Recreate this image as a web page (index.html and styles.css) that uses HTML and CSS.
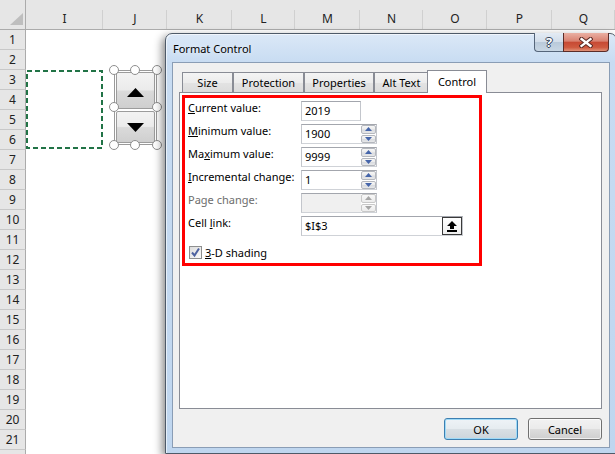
FILE: index.html
```html
<!DOCTYPE html>
<html lang="en">
<head>
<meta charset="utf-8">
<title>Format Control</title>
<link rel="stylesheet" href="styles.css">
</head>
<body>
<div class="sheet">
  <div class="corner"><svg width="13" height="12" viewBox="0 0 13 12"><polygon points="0,12 13,12 13,0" fill="#bebebe"/></svg></div>
  <div class="ch">I</div><div class="ch">J</div><div class="ch">K</div><div class="ch">L</div><div class="ch">M</div><div class="ch">N</div><div class="ch">O</div><div class="ch">P</div><div class="ch">Q</div>
  <div class="cells">
    <svg class="marquee" width="77" height="79" viewBox="0 0 77 79"><rect x="1" y="1" width="75" height="77" fill="none" stroke="#217346" stroke-width="2" stroke-dasharray="5 3"/></svg>
    <div class="spinsel">
      <div class="sbtn sbtn-up"><svg width="17" height="9" viewBox="0 0 17 9"><polygon points="0,9 8.5,0 17,9" fill="#000"/></svg></div>
      <div class="sbtn sbtn-down"><svg width="17" height="9" viewBox="0 0 17 9"><polygon points="0,0 17,0 8.5,9" fill="#000"/></svg></div>
      <span class="hd hd-tl"></span><span class="hd hd-tc"></span><span class="hd hd-tr"></span>
      <span class="hd hd-ml"></span><span class="hd hd-mr"></span>
      <span class="hd hd-bl"></span><span class="hd hd-bc"></span><span class="hd hd-br"></span>
    </div>
  </div>
  <div class="rh">1</div><div class="rh">2</div><div class="rh">3</div><div class="rh">4</div><div class="rh">5</div><div class="rh">6</div><div class="rh">7</div><div class="rh">8</div><div class="rh">9</div><div class="rh">10</div><div class="rh">11</div>
  <div class="rh">12</div><div class="rh">13</div><div class="rh">14</div><div class="rh">15</div><div class="rh">16</div><div class="rh">17</div><div class="rh">18</div><div class="rh">19</div><div class="rh">20</div><div class="rh">21</div><div class="rh"></div>
</div>

<div class="dialog">
  <div class="titlebar">
    <span class="title">Format Control</span>
    <div class="caption">
      <span class="cbtn help">?</span>
      <span class="cbtn close"><svg width="14" height="11" viewBox="0 0 14 11"><path d="M2.5 2 L11.5 9 M11.5 2 L2.5 9" stroke="#5a2a24" stroke-width="4.2" stroke-linecap="square" fill="none"/><path d="M2.5 2 L11.5 9 M11.5 2 L2.5 9" stroke="#fff" stroke-width="2.3" stroke-linecap="square" fill="none"/></svg></span>
    </div>
  </div>
  <div class="client">
    <div class="tabs">
      <div class="tab tab-size">Size</div>
      <div class="tab tab-prot">Protection</div>
      <div class="tab tab-props">Properties</div>
      <div class="tab tab-alt">Alt Text</div>
      <div class="tab tab-ctrl active">Control</div>
    </div>
    <div class="panel">
      <div class="ctrl-box">
        <div class="form">
          <span class="lbl"><u>C</u>urrent value:</span>
          <div class="field fld-short"><span class="val">2019</span></div>

          <span class="lbl"><u>M</u>inimum value:</span>
          <div class="field fld-spin"><span class="val">1900</span>
            <div class="spin"><span class="sb"><svg width="7" height="4" viewBox="0 0 7 4"><polygon points="0,4 3.5,0 7,4"/></svg></span><span class="sb"><svg width="7" height="4" viewBox="0 0 7 4"><polygon points="0,0 7,0 3.5,4"/></svg></span></div>
          </div>

          <span class="lbl">Ma<u>x</u>imum value:</span>
          <div class="field fld-spin"><span class="val">9999</span>
            <div class="spin"><span class="sb"><svg width="7" height="4" viewBox="0 0 7 4"><polygon points="0,4 3.5,0 7,4"/></svg></span><span class="sb"><svg width="7" height="4" viewBox="0 0 7 4"><polygon points="0,0 7,0 3.5,4"/></svg></span></div>
          </div>

          <span class="lbl"><u>I</u>ncremental change:</span>
          <div class="field fld-spin"><span class="val">1</span>
            <div class="spin"><span class="sb"><svg width="7" height="4" viewBox="0 0 7 4"><polygon points="0,4 3.5,0 7,4"/></svg></span><span class="sb"><svg width="7" height="4" viewBox="0 0 7 4"><polygon points="0,0 7,0 3.5,4"/></svg></span></div>
          </div>

          <span class="lbl lbl-disabled">Page change:</span>
          <div class="field fld-spin fld-disabled"><span class="val"></span>
            <div class="spin"><span class="sb"><svg width="7" height="4" viewBox="0 0 7 4"><polygon points="0,4 3.5,0 7,4"/></svg></span><span class="sb"><svg width="7" height="4" viewBox="0 0 7 4"><polygon points="0,0 7,0 3.5,4"/></svg></span></div>
          </div>

          <span class="lbl">Cell <u>l</u>ink:</span>
          <div class="field fld-link"><span class="val">$I$3</span>
            <span class="refbtn"><svg width="10" height="11" viewBox="0 0 10 11"><polygon points="5,0 10,5 7,5 7,8 3,8 3,5 0,5" fill="#000"/><rect x="0" y="9" width="10" height="2" fill="#000"/></svg></span>
          </div>
        </div>
        <div class="check">
          <span class="cbox"><svg width="11" height="11" viewBox="0 0 11 11"><polyline points="2,5.5 4.5,8.5 9,1.5" fill="none" stroke="#4d62a0" stroke-width="2"/></svg></span>
          <span><u>3</u>-D shading</span>
        </div>
      </div>
    </div>
    <div class="buttons">
      <button class="btn btn-default">OK</button>
      <button class="btn">Cancel</button>
    </div>
  </div>
</div>
</body>
</html>
```

FILE: styles.css
```css
* { box-sizing: border-box; }
html, body {
  margin: 0;
  padding: 0;
  width: 615px;
  height: 454px;
  overflow: hidden;
}
body {
  position: relative;
  background: #fff;
  font-family: "Noto Sans", "DejaVu Sans", sans-serif;
}

/* ---------- spreadsheet ---------- */
.sheet {
  display: grid;
  grid-template-columns: 26px 77px 64px 65px 63px 65px 63px 64px 65px 63px;
  grid-template-rows: 30px repeat(22, 20px);
}
.corner {
  background: #e6e6e6;
  border-right: 1px solid #ababab;
  border-bottom: 1px solid #ababab;
  display: flex;
  align-items: flex-end;
  justify-content: flex-end;
  padding: 0 2px 4px 0;
}
.corner svg { display: block; }
.ch {
  background: linear-gradient(#d0d0d0, #d0d0d0) right bottom / 1px 19px no-repeat, #e6e6e6;
  border-bottom: 1px solid #ababab;
  display: flex;
  align-items: flex-end;
  justify-content: center;
  padding-bottom: 3px;
  font-size: 12px;
  line-height: 14px;
  color: #222;
}
.rh {
  grid-column: 1;
  background: #e6e6e6;
  border-right: 1px solid #ababab;
  border-bottom: 1px solid #c8c8c8;
  display: flex;
  align-items: center;
  justify-content: center;
  font-size: 12px;
  color: #222;
}
.cells {
  grid-column: 2 / -1;
  grid-row: 2 / -1;
  position: relative;
  background: #fff;
}
.marquee {
  position: absolute;
  left: 0;
  top: 40px;
  display: block;
}
.spinsel {
  position: absolute;
  left: 88px;
  top: 40px;
  width: 43px;
  height: 75px;
  border: 1px solid #9a9a9a;
  padding: 1px;
  display: flex;
  flex-direction: column;
  gap: 2px;
}
.sbtn {
  flex: 1;
  border: 1px solid #9c9c9c;
  border-radius: 2px;
  background: linear-gradient(#f3f3f3 0%, #ebebeb 48%, #dadada 52%, #cfcfcf 100%);
  display: flex;
  align-items: center;
  justify-content: center;
}
.sbtn svg { display: block; }
.sbtn-up { padding-top: 5px; }
.sbtn-down { padding-top: 1px; }
.hd {
  position: absolute;
  width: 10px;
  height: 10px;
  border-radius: 50%;
  border: 1.5px solid #8e8e8e;
  background: #fff;
}
.hd-tl { left: -6px; top: -6px; }
.hd-tc { left: 15px; top: -6px; }
.hd-tr { left: 37px; top: -6px; }
.hd-ml { left: -6px; top: 31px; }
.hd-mr { left: 37px; top: 31px; }
.hd-bl { left: -6px; top: 69px; }
.hd-bc { left: 15px; top: 69px; }
.hd-br { left: 37px; top: 69px; }

/* ---------- dialog window ---------- */
.dialog {
  position: absolute;
  left: 165px;
  top: 33px;
  width: 452px;
  height: 421px;
  border: 1px solid #4e5a68;
  border-radius: 7px 7px 0 0;
  padding: 0 6px 5px 6px;
  background: linear-gradient(180deg, #dbe8f7 0px, #c8dcf2 28px, #bfd6ef 100%);
  box-shadow: -3px 3px 8px rgba(0, 0, 0, 0.45), inset 1px 1px 0 rgba(255, 255, 255, 0.6);
  display: flex;
  flex-direction: column;
  font-size: 11px;
  color: #000;
}
.titlebar {
  height: 28px;
  flex: none;
  display: flex;
  align-items: center;
  padding-left: 1px;
}
.title {
  font-size: 11px;
  color: #000;
  text-shadow: 0 0 6px rgba(255, 255, 255, 0.9);
}
.caption {
  margin-left: auto;
  margin-right: 1px;
  margin-top: -1px;
  align-self: flex-start;
  display: flex;
}
.cbtn {
  height: 19px;
  display: flex;
  align-items: center;
  justify-content: center;
  border: 1px solid #55657a;
  border-top: none;
}
.help {
  width: 29px;
  border-right: none;
  border-radius: 0 0 0 4px;
  background: linear-gradient(#e3ebf4 0%, #d3deea 48%, #b9c9da 52%, #c8d6e4 100%);
  color: #fff;
  font-weight: bold;
  font-size: 13px;
  line-height: 13px;
  text-shadow: 1px 0 0 #34445a, -1px 0 0 #34445a, 0 1px 0 #34445a, 0 -1px 0 #34445a;
}
.close {
  width: 46px;
  border-color: #5b2c27;
  border-radius: 0 0 4px 0;
  background: linear-gradient(#eab0a3 0%, #d98170 45%, #c74a34 52%, #cf5a40 80%, #e09278 100%);
}
.close svg { display: block; }

.client {
  flex: 1;
  background: #f0f0f0;
  border: 1px solid #8a9db5;
  display: flex;
  flex-direction: column;
  padding: 7px 7px 7px 6px;
}

/* tabs */
.tabs {
  height: 22px;
  flex: none;
  display: flex;
  align-items: flex-end;
  padding-left: 3px;
  position: relative;
  z-index: 1;
}
.tab {
  height: 20px;
  border: 1px solid #898c95;
  border-bottom: none;
  background: linear-gradient(#f4f4f4 0%, #ececec 50%, #e3e3e3 51%, #dcdcdc 100%);
  display: flex;
  align-items: center;
  justify-content: center;
  font-size: 11px;
  white-space: nowrap;
}
.tab-size { width: 51px; }
.tab-prot { width: 71px; }
.tab-props { width: 70px; }
.tab-alt { width: 55px; }
.tab-ctrl { width: 60px; }
.tab.active {
  height: 23px;
  margin-left: -2px;
  margin-bottom: -1px;
  background: #fff;
  padding-bottom: 2px;
}

.panel {
  flex: 1;
  background: #fff;
  border: 1px solid #898c95;
  padding: 2px 0 0 2px;
}
.ctrl-box {
  width: 300px;
  border: 3px solid #ff0000;
  padding: 3px 0 4px 3px;
}
.form {
  display: grid;
  grid-template-columns: 113px auto;
  grid-auto-rows: 20px;
  row-gap: 3px;
  align-items: start;
}
.lbl {
  line-height: 16px;
  margin-top: -1px;
  white-space: nowrap;
}
.lbl-disabled { color: #6d6d6d; }
.field {
  height: 20px;
  display: flex;
  align-items: center;
  background: #fff;
  border: 1px solid #a9abb2;
  border-color: #a3a6ad #c3c6cc #cfd2d7 #c3c6cc;
}
.val {
  flex: 1;
  padding-left: 3px;
  line-height: 18px;
  white-space: nowrap;
}
.fld-short { width: 60px; }
.fld-spin { width: 76px; }
.fld-link { width: 162px; }
.fld-disabled { background: #f0f0f0; }
.fld-disabled .val { background: #f0f0f0; }

.spin {
  width: 15px;
  height: 18px;
  display: flex;
  flex-direction: column;
  gap: 1px;
  background: #fff;
}
.sb {
  flex: 1;
  border: 1px solid #b4b7bd;
  border-radius: 2px;
  background: linear-gradient(#f6f6f6 0%, #ececec 45%, #d9dbdf 55%, #e6e7e9 100%);
  display: flex;
  align-items: center;
  justify-content: center;
}
.sb svg { display: block; fill: #4565aa; }
.fld-disabled .sb svg { fill: #a6a6a6; }
.fld-disabled .sb { background: linear-gradient(#f8f8f8, #ececec); border-color: #c8c8c8; }

.refbtn {
  width: 20px;
  height: 18px;
  margin-right: 0;
  border: 1px solid #3a3a3a;
  background: linear-gradient(#ffffff, #eeeeee);
  display: flex;
  align-items: center;
  justify-content: center;
}
.refbtn svg { display: block; }

.check {
  display: flex;
  align-items: center;
  gap: 3px;
  height: 13px;
  margin-top: 10px;
  margin-left: 1px;
  line-height: 13px;
}
.cbox {
  width: 13px;
  height: 13px;
  border: 1px solid #8e8f8f;
  background: linear-gradient(135deg, #dcdcdc, #fbfbfb);
  display: flex;
  align-items: center;
  justify-content: center;
}
.cbox svg { display: block; }

.buttons {
  flex: none;
  margin-top: 9px;
  display: flex;
  justify-content: flex-end;
  gap: 10px;
}
.btn {
  width: 74px;
  height: 22px;
  margin: 0;
  padding: 0;
  font-family: "Noto Sans", "DejaVu Sans", sans-serif;
  font-size: 11px;
  color: #000;
  border: 1px solid #707070;
  border-radius: 3px;
  background: linear-gradient(#f2f2f2 0%, #ebebeb 48%, #dddddd 52%, #cfcfcf 100%);
  box-shadow: inset 0 0 0 1px rgba(255, 255, 255, 0.7);
}
.btn-default {
  border-color: #3c7fb1;
  box-shadow: inset 0 0 0 1px #9fdaf7;
  background: linear-gradient(#eef3f7 0%, #e6ecf0 48%, #d8dfe4 52%, #ccd5dc 100%);
}
```
